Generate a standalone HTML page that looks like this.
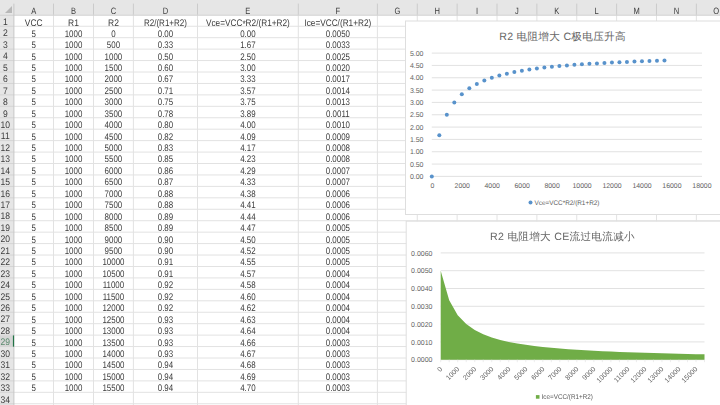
<!DOCTYPE html>
<html><head><meta charset="utf-8"><style>
*{margin:0;padding:0}
html,body{width:720px;height:405px;overflow:hidden;background:#fff}
svg{position:absolute;left:0;top:0;filter:blur(0.3px)}
text{font-family:"Liberation Sans", sans-serif;text-rendering:geometricPrecision;white-space:pre}
</style></head>
<body>
<svg width="720" height="405" viewBox="0 0 720 405">
<rect x="0" y="0" width="720" height="15.200000000000001" fill="#e6e6e6"/>
<rect x="0" y="0" width="13.9" height="405" fill="#e6e6e6"/>
<line x1="13.9" y1="26.24" x2="720" y2="26.24" stroke="#e2e2e2" stroke-width="1"/>
<line x1="0" y1="26.24" x2="13.9" y2="26.24" stroke="#d4d4d4" stroke-width="1"/>
<line x1="13.9" y1="37.68" x2="720" y2="37.68" stroke="#e2e2e2" stroke-width="1"/>
<line x1="0" y1="37.68" x2="13.9" y2="37.68" stroke="#d4d4d4" stroke-width="1"/>
<line x1="13.9" y1="49.12" x2="720" y2="49.12" stroke="#e2e2e2" stroke-width="1"/>
<line x1="0" y1="49.12" x2="13.9" y2="49.12" stroke="#d4d4d4" stroke-width="1"/>
<line x1="13.9" y1="60.56" x2="720" y2="60.56" stroke="#e2e2e2" stroke-width="1"/>
<line x1="0" y1="60.56" x2="13.9" y2="60.56" stroke="#d4d4d4" stroke-width="1"/>
<line x1="13.9" y1="72.00" x2="720" y2="72.00" stroke="#e2e2e2" stroke-width="1"/>
<line x1="0" y1="72.00" x2="13.9" y2="72.00" stroke="#d4d4d4" stroke-width="1"/>
<line x1="13.9" y1="83.44" x2="720" y2="83.44" stroke="#e2e2e2" stroke-width="1"/>
<line x1="0" y1="83.44" x2="13.9" y2="83.44" stroke="#d4d4d4" stroke-width="1"/>
<line x1="13.9" y1="94.88" x2="720" y2="94.88" stroke="#e2e2e2" stroke-width="1"/>
<line x1="0" y1="94.88" x2="13.9" y2="94.88" stroke="#d4d4d4" stroke-width="1"/>
<line x1="13.9" y1="106.32" x2="720" y2="106.32" stroke="#e2e2e2" stroke-width="1"/>
<line x1="0" y1="106.32" x2="13.9" y2="106.32" stroke="#d4d4d4" stroke-width="1"/>
<line x1="13.9" y1="117.76" x2="720" y2="117.76" stroke="#e2e2e2" stroke-width="1"/>
<line x1="0" y1="117.76" x2="13.9" y2="117.76" stroke="#d4d4d4" stroke-width="1"/>
<line x1="13.9" y1="129.20" x2="720" y2="129.20" stroke="#e2e2e2" stroke-width="1"/>
<line x1="0" y1="129.20" x2="13.9" y2="129.20" stroke="#d4d4d4" stroke-width="1"/>
<line x1="13.9" y1="140.64" x2="720" y2="140.64" stroke="#e2e2e2" stroke-width="1"/>
<line x1="0" y1="140.64" x2="13.9" y2="140.64" stroke="#d4d4d4" stroke-width="1"/>
<line x1="13.9" y1="152.08" x2="720" y2="152.08" stroke="#e2e2e2" stroke-width="1"/>
<line x1="0" y1="152.08" x2="13.9" y2="152.08" stroke="#d4d4d4" stroke-width="1"/>
<line x1="13.9" y1="163.52" x2="720" y2="163.52" stroke="#e2e2e2" stroke-width="1"/>
<line x1="0" y1="163.52" x2="13.9" y2="163.52" stroke="#d4d4d4" stroke-width="1"/>
<line x1="13.9" y1="174.96" x2="720" y2="174.96" stroke="#e2e2e2" stroke-width="1"/>
<line x1="0" y1="174.96" x2="13.9" y2="174.96" stroke="#d4d4d4" stroke-width="1"/>
<line x1="13.9" y1="186.40" x2="720" y2="186.40" stroke="#e2e2e2" stroke-width="1"/>
<line x1="0" y1="186.40" x2="13.9" y2="186.40" stroke="#d4d4d4" stroke-width="1"/>
<line x1="13.9" y1="197.84" x2="720" y2="197.84" stroke="#e2e2e2" stroke-width="1"/>
<line x1="0" y1="197.84" x2="13.9" y2="197.84" stroke="#d4d4d4" stroke-width="1"/>
<line x1="13.9" y1="209.28" x2="720" y2="209.28" stroke="#e2e2e2" stroke-width="1"/>
<line x1="0" y1="209.28" x2="13.9" y2="209.28" stroke="#d4d4d4" stroke-width="1"/>
<line x1="13.9" y1="220.72" x2="720" y2="220.72" stroke="#e2e2e2" stroke-width="1"/>
<line x1="0" y1="220.72" x2="13.9" y2="220.72" stroke="#d4d4d4" stroke-width="1"/>
<line x1="13.9" y1="232.16" x2="720" y2="232.16" stroke="#e2e2e2" stroke-width="1"/>
<line x1="0" y1="232.16" x2="13.9" y2="232.16" stroke="#d4d4d4" stroke-width="1"/>
<line x1="13.9" y1="243.60" x2="720" y2="243.60" stroke="#e2e2e2" stroke-width="1"/>
<line x1="0" y1="243.60" x2="13.9" y2="243.60" stroke="#d4d4d4" stroke-width="1"/>
<line x1="13.9" y1="255.04" x2="720" y2="255.04" stroke="#e2e2e2" stroke-width="1"/>
<line x1="0" y1="255.04" x2="13.9" y2="255.04" stroke="#d4d4d4" stroke-width="1"/>
<line x1="13.9" y1="266.48" x2="720" y2="266.48" stroke="#e2e2e2" stroke-width="1"/>
<line x1="0" y1="266.48" x2="13.9" y2="266.48" stroke="#d4d4d4" stroke-width="1"/>
<line x1="13.9" y1="277.92" x2="720" y2="277.92" stroke="#e2e2e2" stroke-width="1"/>
<line x1="0" y1="277.92" x2="13.9" y2="277.92" stroke="#d4d4d4" stroke-width="1"/>
<line x1="13.9" y1="289.36" x2="720" y2="289.36" stroke="#e2e2e2" stroke-width="1"/>
<line x1="0" y1="289.36" x2="13.9" y2="289.36" stroke="#d4d4d4" stroke-width="1"/>
<line x1="13.9" y1="300.80" x2="720" y2="300.80" stroke="#e2e2e2" stroke-width="1"/>
<line x1="0" y1="300.80" x2="13.9" y2="300.80" stroke="#d4d4d4" stroke-width="1"/>
<line x1="13.9" y1="312.24" x2="720" y2="312.24" stroke="#e2e2e2" stroke-width="1"/>
<line x1="0" y1="312.24" x2="13.9" y2="312.24" stroke="#d4d4d4" stroke-width="1"/>
<line x1="13.9" y1="323.68" x2="720" y2="323.68" stroke="#e2e2e2" stroke-width="1"/>
<line x1="0" y1="323.68" x2="13.9" y2="323.68" stroke="#d4d4d4" stroke-width="1"/>
<line x1="13.9" y1="335.12" x2="720" y2="335.12" stroke="#e2e2e2" stroke-width="1"/>
<line x1="0" y1="335.12" x2="13.9" y2="335.12" stroke="#d4d4d4" stroke-width="1"/>
<line x1="13.9" y1="346.56" x2="720" y2="346.56" stroke="#e2e2e2" stroke-width="1"/>
<line x1="0" y1="346.56" x2="13.9" y2="346.56" stroke="#d4d4d4" stroke-width="1"/>
<line x1="13.9" y1="358.00" x2="720" y2="358.00" stroke="#e2e2e2" stroke-width="1"/>
<line x1="0" y1="358.00" x2="13.9" y2="358.00" stroke="#d4d4d4" stroke-width="1"/>
<line x1="13.9" y1="369.44" x2="720" y2="369.44" stroke="#e2e2e2" stroke-width="1"/>
<line x1="0" y1="369.44" x2="13.9" y2="369.44" stroke="#d4d4d4" stroke-width="1"/>
<line x1="13.9" y1="380.88" x2="720" y2="380.88" stroke="#e2e2e2" stroke-width="1"/>
<line x1="0" y1="380.88" x2="13.9" y2="380.88" stroke="#d4d4d4" stroke-width="1"/>
<line x1="13.9" y1="392.32" x2="720" y2="392.32" stroke="#e2e2e2" stroke-width="1"/>
<line x1="0" y1="392.32" x2="13.9" y2="392.32" stroke="#d4d4d4" stroke-width="1"/>
<line x1="13.9" y1="403.76" x2="720" y2="403.76" stroke="#e2e2e2" stroke-width="1"/>
<line x1="0" y1="403.76" x2="13.9" y2="403.76" stroke="#d4d4d4" stroke-width="1"/>
<line x1="13.9" y1="415.20" x2="720" y2="415.20" stroke="#e2e2e2" stroke-width="1"/>
<line x1="0" y1="415.20" x2="13.9" y2="415.20" stroke="#d4d4d4" stroke-width="1"/>
<line x1="53.5" y1="14.8" x2="53.5" y2="405" stroke="#e2e2e2" stroke-width="1"/>
<line x1="53.50" y1="3.6" x2="53.50" y2="14.8" stroke="#c6c6c6" stroke-width="0.85"/>
<line x1="93.5" y1="14.8" x2="93.5" y2="405" stroke="#e2e2e2" stroke-width="1"/>
<line x1="93.50" y1="3.6" x2="93.50" y2="14.8" stroke="#c6c6c6" stroke-width="0.85"/>
<line x1="133.4" y1="14.8" x2="133.4" y2="405" stroke="#e2e2e2" stroke-width="1"/>
<line x1="133.40" y1="3.6" x2="133.40" y2="14.8" stroke="#c6c6c6" stroke-width="0.85"/>
<line x1="197.5" y1="14.8" x2="197.5" y2="405" stroke="#e2e2e2" stroke-width="1"/>
<line x1="197.50" y1="3.6" x2="197.50" y2="14.8" stroke="#c6c6c6" stroke-width="0.85"/>
<line x1="298.3" y1="14.8" x2="298.3" y2="405" stroke="#e2e2e2" stroke-width="1"/>
<line x1="298.30" y1="3.6" x2="298.30" y2="14.8" stroke="#c6c6c6" stroke-width="0.85"/>
<line x1="377.4" y1="14.8" x2="377.4" y2="405" stroke="#e2e2e2" stroke-width="1"/>
<line x1="377.40" y1="3.6" x2="377.40" y2="14.8" stroke="#c6c6c6" stroke-width="0.85"/>
<line x1="417.27" y1="14.8" x2="417.27" y2="405" stroke="#e2e2e2" stroke-width="1"/>
<line x1="417.27" y1="3.6" x2="417.27" y2="14.8" stroke="#c6c6c6" stroke-width="0.85"/>
<line x1="457.14" y1="14.8" x2="457.14" y2="405" stroke="#e2e2e2" stroke-width="1"/>
<line x1="457.14" y1="3.6" x2="457.14" y2="14.8" stroke="#c6c6c6" stroke-width="0.85"/>
<line x1="497.01" y1="14.8" x2="497.01" y2="405" stroke="#e2e2e2" stroke-width="1"/>
<line x1="497.01" y1="3.6" x2="497.01" y2="14.8" stroke="#c6c6c6" stroke-width="0.85"/>
<line x1="536.88" y1="14.8" x2="536.88" y2="405" stroke="#e2e2e2" stroke-width="1"/>
<line x1="536.88" y1="3.6" x2="536.88" y2="14.8" stroke="#c6c6c6" stroke-width="0.85"/>
<line x1="576.75" y1="14.8" x2="576.75" y2="405" stroke="#e2e2e2" stroke-width="1"/>
<line x1="576.75" y1="3.6" x2="576.75" y2="14.8" stroke="#c6c6c6" stroke-width="0.85"/>
<line x1="616.6199999999999" y1="14.8" x2="616.6199999999999" y2="405" stroke="#e2e2e2" stroke-width="1"/>
<line x1="616.62" y1="3.6" x2="616.62" y2="14.8" stroke="#c6c6c6" stroke-width="0.85"/>
<line x1="656.49" y1="14.8" x2="656.49" y2="405" stroke="#e2e2e2" stroke-width="1"/>
<line x1="656.49" y1="3.6" x2="656.49" y2="14.8" stroke="#c6c6c6" stroke-width="0.85"/>
<line x1="696.3599999999999" y1="14.8" x2="696.3599999999999" y2="405" stroke="#e2e2e2" stroke-width="1"/>
<line x1="696.36" y1="3.6" x2="696.36" y2="14.8" stroke="#c6c6c6" stroke-width="0.85"/>
<line x1="736.23" y1="14.8" x2="736.23" y2="405" stroke="#e2e2e2" stroke-width="1"/>
<line x1="736.23" y1="3.6" x2="736.23" y2="14.8" stroke="#c6c6c6" stroke-width="0.85"/>
<line x1="0" y1="15.200000000000001" x2="720" y2="15.200000000000001" stroke="#d0d0d0" stroke-width="1"/>
<line x1="13.9" y1="3.6" x2="13.9" y2="405" stroke="#c8c8c8" stroke-width="1"/>
<rect x="0" y="335.62" width="13.4" height="10.44" fill="#d6d6d6"/>
<rect x="12.9" y="335.42" width="1.2" height="11.24" fill="#217346"/>
<polygon points="12,6 12,13 5,13" fill="#b8b8b8"/>
<text x="41.098" y="13.500" transform="scale(0.82,1)" font-size="9.2" fill="#3c3c3c" text-anchor="middle">A</text>
<text x="89.634" y="13.500" transform="scale(0.82,1)" font-size="9.2" fill="#3c3c3c" text-anchor="middle">B</text>
<text x="138.354" y="13.500" transform="scale(0.82,1)" font-size="9.2" fill="#3c3c3c" text-anchor="middle">C</text>
<text x="201.768" y="13.500" transform="scale(0.82,1)" font-size="9.2" fill="#3c3c3c" text-anchor="middle">D</text>
<text x="302.317" y="13.500" transform="scale(0.82,1)" font-size="9.2" fill="#3c3c3c" text-anchor="middle">E</text>
<text x="412.012" y="13.500" transform="scale(0.82,1)" font-size="9.2" fill="#3c3c3c" text-anchor="middle">F</text>
<text x="484.555" y="13.500" transform="scale(0.82,1)" font-size="9.2" fill="#3c3c3c" text-anchor="middle">G</text>
<text x="533.177" y="13.500" transform="scale(0.82,1)" font-size="9.2" fill="#3c3c3c" text-anchor="middle">H</text>
<text x="581.799" y="13.500" transform="scale(0.82,1)" font-size="9.2" fill="#3c3c3c" text-anchor="middle">I</text>
<text x="630.421" y="13.500" transform="scale(0.82,1)" font-size="9.2" fill="#3c3c3c" text-anchor="middle">J</text>
<text x="679.043" y="13.500" transform="scale(0.82,1)" font-size="9.2" fill="#3c3c3c" text-anchor="middle">K</text>
<text x="727.665" y="13.500" transform="scale(0.82,1)" font-size="9.2" fill="#3c3c3c" text-anchor="middle">L</text>
<text x="776.287" y="13.500" transform="scale(0.82,1)" font-size="9.2" fill="#3c3c3c" text-anchor="middle">M</text>
<text x="824.909" y="13.500" transform="scale(0.82,1)" font-size="9.2" fill="#3c3c3c" text-anchor="middle">N</text>
<text x="873.530" y="13.500" transform="scale(0.82,1)" font-size="9.2" fill="#3c3c3c" text-anchor="middle">O</text>
<text x="5.889" y="25.000" transform="scale(0.9,1)" font-size="9.5" fill="#3c3c3c" text-anchor="middle">1</text>
<text x="5.889" y="36.440" transform="scale(0.9,1)" font-size="9.5" fill="#3c3c3c" text-anchor="middle">2</text>
<text x="5.889" y="47.880" transform="scale(0.9,1)" font-size="9.5" fill="#3c3c3c" text-anchor="middle">3</text>
<text x="5.889" y="59.320" transform="scale(0.9,1)" font-size="9.5" fill="#3c3c3c" text-anchor="middle">4</text>
<text x="5.889" y="70.760" transform="scale(0.9,1)" font-size="9.5" fill="#3c3c3c" text-anchor="middle">5</text>
<text x="5.889" y="82.200" transform="scale(0.9,1)" font-size="9.5" fill="#3c3c3c" text-anchor="middle">6</text>
<text x="5.889" y="93.640" transform="scale(0.9,1)" font-size="9.5" fill="#3c3c3c" text-anchor="middle">7</text>
<text x="5.889" y="105.080" transform="scale(0.9,1)" font-size="9.5" fill="#3c3c3c" text-anchor="middle">8</text>
<text x="5.889" y="116.520" transform="scale(0.9,1)" font-size="9.5" fill="#3c3c3c" text-anchor="middle">9</text>
<text x="5.889" y="127.960" transform="scale(0.9,1)" font-size="9.5" fill="#3c3c3c" text-anchor="middle">10</text>
<text x="5.889" y="139.400" transform="scale(0.9,1)" font-size="9.5" fill="#3c3c3c" text-anchor="middle">11</text>
<text x="5.889" y="150.840" transform="scale(0.9,1)" font-size="9.5" fill="#3c3c3c" text-anchor="middle">12</text>
<text x="5.889" y="162.280" transform="scale(0.9,1)" font-size="9.5" fill="#3c3c3c" text-anchor="middle">13</text>
<text x="5.889" y="173.720" transform="scale(0.9,1)" font-size="9.5" fill="#3c3c3c" text-anchor="middle">14</text>
<text x="5.889" y="185.160" transform="scale(0.9,1)" font-size="9.5" fill="#3c3c3c" text-anchor="middle">15</text>
<text x="5.889" y="196.600" transform="scale(0.9,1)" font-size="9.5" fill="#3c3c3c" text-anchor="middle">16</text>
<text x="5.889" y="208.040" transform="scale(0.9,1)" font-size="9.5" fill="#3c3c3c" text-anchor="middle">17</text>
<text x="5.889" y="219.480" transform="scale(0.9,1)" font-size="9.5" fill="#3c3c3c" text-anchor="middle">18</text>
<text x="5.889" y="230.920" transform="scale(0.9,1)" font-size="9.5" fill="#3c3c3c" text-anchor="middle">19</text>
<text x="5.889" y="242.360" transform="scale(0.9,1)" font-size="9.5" fill="#3c3c3c" text-anchor="middle">20</text>
<text x="5.889" y="253.800" transform="scale(0.9,1)" font-size="9.5" fill="#3c3c3c" text-anchor="middle">21</text>
<text x="5.889" y="265.240" transform="scale(0.9,1)" font-size="9.5" fill="#3c3c3c" text-anchor="middle">22</text>
<text x="5.889" y="276.680" transform="scale(0.9,1)" font-size="9.5" fill="#3c3c3c" text-anchor="middle">23</text>
<text x="5.889" y="288.120" transform="scale(0.9,1)" font-size="9.5" fill="#3c3c3c" text-anchor="middle">24</text>
<text x="5.889" y="299.560" transform="scale(0.9,1)" font-size="9.5" fill="#3c3c3c" text-anchor="middle">25</text>
<text x="5.889" y="311.000" transform="scale(0.9,1)" font-size="9.5" fill="#3c3c3c" text-anchor="middle">26</text>
<text x="5.889" y="322.440" transform="scale(0.9,1)" font-size="9.5" fill="#3c3c3c" text-anchor="middle">27</text>
<text x="5.889" y="333.880" transform="scale(0.9,1)" font-size="9.5" fill="#3c3c3c" text-anchor="middle">28</text>
<text x="5.889" y="345.320" transform="scale(0.9,1)" font-size="9.5" fill="#5a8a6e" text-anchor="middle">29</text>
<text x="5.889" y="356.760" transform="scale(0.9,1)" font-size="9.5" fill="#3c3c3c" text-anchor="middle">30</text>
<text x="5.889" y="368.200" transform="scale(0.9,1)" font-size="9.5" fill="#3c3c3c" text-anchor="middle">31</text>
<text x="5.889" y="379.640" transform="scale(0.9,1)" font-size="9.5" fill="#3c3c3c" text-anchor="middle">32</text>
<text x="5.889" y="391.080" transform="scale(0.9,1)" font-size="9.5" fill="#3c3c3c" text-anchor="middle">33</text>
<text x="5.889" y="402.520" transform="scale(0.9,1)" font-size="9.5" fill="#3c3c3c" text-anchor="middle">34</text>
<text x="5.889" y="413.960" transform="scale(0.9,1)" font-size="9.5" fill="#3c3c3c" text-anchor="middle">35</text>
<text x="37.865" y="25.600" transform="scale(0.89,1)" font-size="9.5" fill="#3c3c3c" text-anchor="middle">VCC</text>
<text x="82.584" y="25.600" transform="scale(0.89,1)" font-size="9.5" fill="#3c3c3c" text-anchor="middle">R1</text>
<text x="127.472" y="25.600" transform="scale(0.89,1)" font-size="9.5" fill="#3c3c3c" text-anchor="middle">R2</text>
<text x="195.799" y="25.600" transform="scale(0.845,1)" font-size="9.5" fill="#3c3c3c" text-anchor="middle">R2/(R1+R2)</text>
<text x="285.599" y="25.600" transform="scale(0.868,1)" font-size="9.5" fill="#3c3c3c" text-anchor="middle">Vce=VCC<tspan dy="1.6">*</tspan><tspan dy="-1.6">R2/(R1+R2)</tspan></text>
<text x="389.228" y="25.600" transform="scale(0.868,1)" font-size="9.5" fill="#3c3c3c" text-anchor="middle">Ice=VCC/(R1+R2)</text>
<text x="40.359" y="36.640" transform="scale(0.835,1)" font-size="9.5" fill="#3c3c3c" text-anchor="middle">5</text>
<text x="88.024" y="36.640" transform="scale(0.835,1)" font-size="9.5" fill="#3c3c3c" text-anchor="middle">1000</text>
<text x="135.868" y="36.640" transform="scale(0.835,1)" font-size="9.5" fill="#3c3c3c" text-anchor="middle">0</text>
<text x="198.144" y="36.640" transform="scale(0.835,1)" font-size="9.5" fill="#3c3c3c" text-anchor="middle">0.00</text>
<text x="296.886" y="36.640" transform="scale(0.835,1)" font-size="9.5" fill="#3c3c3c" text-anchor="middle">0.00</text>
<text x="404.611" y="36.640" transform="scale(0.835,1)" font-size="9.5" fill="#3c3c3c" text-anchor="middle">0.0050</text>
<text x="40.359" y="48.080" transform="scale(0.835,1)" font-size="9.5" fill="#3c3c3c" text-anchor="middle">5</text>
<text x="88.024" y="48.080" transform="scale(0.835,1)" font-size="9.5" fill="#3c3c3c" text-anchor="middle">1000</text>
<text x="135.868" y="48.080" transform="scale(0.835,1)" font-size="9.5" fill="#3c3c3c" text-anchor="middle">500</text>
<text x="198.144" y="48.080" transform="scale(0.835,1)" font-size="9.5" fill="#3c3c3c" text-anchor="middle">0.33</text>
<text x="296.886" y="48.080" transform="scale(0.835,1)" font-size="9.5" fill="#3c3c3c" text-anchor="middle">1.67</text>
<text x="404.611" y="48.080" transform="scale(0.835,1)" font-size="9.5" fill="#3c3c3c" text-anchor="middle">0.0033</text>
<text x="40.359" y="59.520" transform="scale(0.835,1)" font-size="9.5" fill="#3c3c3c" text-anchor="middle">5</text>
<text x="88.024" y="59.520" transform="scale(0.835,1)" font-size="9.5" fill="#3c3c3c" text-anchor="middle">1000</text>
<text x="135.868" y="59.520" transform="scale(0.835,1)" font-size="9.5" fill="#3c3c3c" text-anchor="middle">1000</text>
<text x="198.144" y="59.520" transform="scale(0.835,1)" font-size="9.5" fill="#3c3c3c" text-anchor="middle">0.50</text>
<text x="296.886" y="59.520" transform="scale(0.835,1)" font-size="9.5" fill="#3c3c3c" text-anchor="middle">2.50</text>
<text x="404.611" y="59.520" transform="scale(0.835,1)" font-size="9.5" fill="#3c3c3c" text-anchor="middle">0.0025</text>
<text x="40.359" y="70.960" transform="scale(0.835,1)" font-size="9.5" fill="#3c3c3c" text-anchor="middle">5</text>
<text x="88.024" y="70.960" transform="scale(0.835,1)" font-size="9.5" fill="#3c3c3c" text-anchor="middle">1000</text>
<text x="135.868" y="70.960" transform="scale(0.835,1)" font-size="9.5" fill="#3c3c3c" text-anchor="middle">1500</text>
<text x="198.144" y="70.960" transform="scale(0.835,1)" font-size="9.5" fill="#3c3c3c" text-anchor="middle">0.60</text>
<text x="296.886" y="70.960" transform="scale(0.835,1)" font-size="9.5" fill="#3c3c3c" text-anchor="middle">3.00</text>
<text x="404.611" y="70.960" transform="scale(0.835,1)" font-size="9.5" fill="#3c3c3c" text-anchor="middle">0.0020</text>
<text x="40.359" y="82.400" transform="scale(0.835,1)" font-size="9.5" fill="#3c3c3c" text-anchor="middle">5</text>
<text x="88.024" y="82.400" transform="scale(0.835,1)" font-size="9.5" fill="#3c3c3c" text-anchor="middle">1000</text>
<text x="135.868" y="82.400" transform="scale(0.835,1)" font-size="9.5" fill="#3c3c3c" text-anchor="middle">2000</text>
<text x="198.144" y="82.400" transform="scale(0.835,1)" font-size="9.5" fill="#3c3c3c" text-anchor="middle">0.67</text>
<text x="296.886" y="82.400" transform="scale(0.835,1)" font-size="9.5" fill="#3c3c3c" text-anchor="middle">3.33</text>
<text x="404.611" y="82.400" transform="scale(0.835,1)" font-size="9.5" fill="#3c3c3c" text-anchor="middle">0.0017</text>
<text x="40.359" y="93.840" transform="scale(0.835,1)" font-size="9.5" fill="#3c3c3c" text-anchor="middle">5</text>
<text x="88.024" y="93.840" transform="scale(0.835,1)" font-size="9.5" fill="#3c3c3c" text-anchor="middle">1000</text>
<text x="135.868" y="93.840" transform="scale(0.835,1)" font-size="9.5" fill="#3c3c3c" text-anchor="middle">2500</text>
<text x="198.144" y="93.840" transform="scale(0.835,1)" font-size="9.5" fill="#3c3c3c" text-anchor="middle">0.71</text>
<text x="296.886" y="93.840" transform="scale(0.835,1)" font-size="9.5" fill="#3c3c3c" text-anchor="middle">3.57</text>
<text x="404.611" y="93.840" transform="scale(0.835,1)" font-size="9.5" fill="#3c3c3c" text-anchor="middle">0.0014</text>
<text x="40.359" y="105.280" transform="scale(0.835,1)" font-size="9.5" fill="#3c3c3c" text-anchor="middle">5</text>
<text x="88.024" y="105.280" transform="scale(0.835,1)" font-size="9.5" fill="#3c3c3c" text-anchor="middle">1000</text>
<text x="135.868" y="105.280" transform="scale(0.835,1)" font-size="9.5" fill="#3c3c3c" text-anchor="middle">3000</text>
<text x="198.144" y="105.280" transform="scale(0.835,1)" font-size="9.5" fill="#3c3c3c" text-anchor="middle">0.75</text>
<text x="296.886" y="105.280" transform="scale(0.835,1)" font-size="9.5" fill="#3c3c3c" text-anchor="middle">3.75</text>
<text x="404.611" y="105.280" transform="scale(0.835,1)" font-size="9.5" fill="#3c3c3c" text-anchor="middle">0.0013</text>
<text x="40.359" y="116.720" transform="scale(0.835,1)" font-size="9.5" fill="#3c3c3c" text-anchor="middle">5</text>
<text x="88.024" y="116.720" transform="scale(0.835,1)" font-size="9.5" fill="#3c3c3c" text-anchor="middle">1000</text>
<text x="135.868" y="116.720" transform="scale(0.835,1)" font-size="9.5" fill="#3c3c3c" text-anchor="middle">3500</text>
<text x="198.144" y="116.720" transform="scale(0.835,1)" font-size="9.5" fill="#3c3c3c" text-anchor="middle">0.78</text>
<text x="296.886" y="116.720" transform="scale(0.835,1)" font-size="9.5" fill="#3c3c3c" text-anchor="middle">3.89</text>
<text x="404.611" y="116.720" transform="scale(0.835,1)" font-size="9.5" fill="#3c3c3c" text-anchor="middle">0.0011</text>
<text x="40.359" y="128.160" transform="scale(0.835,1)" font-size="9.5" fill="#3c3c3c" text-anchor="middle">5</text>
<text x="88.024" y="128.160" transform="scale(0.835,1)" font-size="9.5" fill="#3c3c3c" text-anchor="middle">1000</text>
<text x="135.868" y="128.160" transform="scale(0.835,1)" font-size="9.5" fill="#3c3c3c" text-anchor="middle">4000</text>
<text x="198.144" y="128.160" transform="scale(0.835,1)" font-size="9.5" fill="#3c3c3c" text-anchor="middle">0.80</text>
<text x="296.886" y="128.160" transform="scale(0.835,1)" font-size="9.5" fill="#3c3c3c" text-anchor="middle">4.00</text>
<text x="404.611" y="128.160" transform="scale(0.835,1)" font-size="9.5" fill="#3c3c3c" text-anchor="middle">0.0010</text>
<text x="40.359" y="139.600" transform="scale(0.835,1)" font-size="9.5" fill="#3c3c3c" text-anchor="middle">5</text>
<text x="88.024" y="139.600" transform="scale(0.835,1)" font-size="9.5" fill="#3c3c3c" text-anchor="middle">1000</text>
<text x="135.868" y="139.600" transform="scale(0.835,1)" font-size="9.5" fill="#3c3c3c" text-anchor="middle">4500</text>
<text x="198.144" y="139.600" transform="scale(0.835,1)" font-size="9.5" fill="#3c3c3c" text-anchor="middle">0.82</text>
<text x="296.886" y="139.600" transform="scale(0.835,1)" font-size="9.5" fill="#3c3c3c" text-anchor="middle">4.09</text>
<text x="404.611" y="139.600" transform="scale(0.835,1)" font-size="9.5" fill="#3c3c3c" text-anchor="middle">0.0009</text>
<text x="40.359" y="151.040" transform="scale(0.835,1)" font-size="9.5" fill="#3c3c3c" text-anchor="middle">5</text>
<text x="88.024" y="151.040" transform="scale(0.835,1)" font-size="9.5" fill="#3c3c3c" text-anchor="middle">1000</text>
<text x="135.868" y="151.040" transform="scale(0.835,1)" font-size="9.5" fill="#3c3c3c" text-anchor="middle">5000</text>
<text x="198.144" y="151.040" transform="scale(0.835,1)" font-size="9.5" fill="#3c3c3c" text-anchor="middle">0.83</text>
<text x="296.886" y="151.040" transform="scale(0.835,1)" font-size="9.5" fill="#3c3c3c" text-anchor="middle">4.17</text>
<text x="404.611" y="151.040" transform="scale(0.835,1)" font-size="9.5" fill="#3c3c3c" text-anchor="middle">0.0008</text>
<text x="40.359" y="162.480" transform="scale(0.835,1)" font-size="9.5" fill="#3c3c3c" text-anchor="middle">5</text>
<text x="88.024" y="162.480" transform="scale(0.835,1)" font-size="9.5" fill="#3c3c3c" text-anchor="middle">1000</text>
<text x="135.868" y="162.480" transform="scale(0.835,1)" font-size="9.5" fill="#3c3c3c" text-anchor="middle">5500</text>
<text x="198.144" y="162.480" transform="scale(0.835,1)" font-size="9.5" fill="#3c3c3c" text-anchor="middle">0.85</text>
<text x="296.886" y="162.480" transform="scale(0.835,1)" font-size="9.5" fill="#3c3c3c" text-anchor="middle">4.23</text>
<text x="404.611" y="162.480" transform="scale(0.835,1)" font-size="9.5" fill="#3c3c3c" text-anchor="middle">0.0008</text>
<text x="40.359" y="173.920" transform="scale(0.835,1)" font-size="9.5" fill="#3c3c3c" text-anchor="middle">5</text>
<text x="88.024" y="173.920" transform="scale(0.835,1)" font-size="9.5" fill="#3c3c3c" text-anchor="middle">1000</text>
<text x="135.868" y="173.920" transform="scale(0.835,1)" font-size="9.5" fill="#3c3c3c" text-anchor="middle">6000</text>
<text x="198.144" y="173.920" transform="scale(0.835,1)" font-size="9.5" fill="#3c3c3c" text-anchor="middle">0.86</text>
<text x="296.886" y="173.920" transform="scale(0.835,1)" font-size="9.5" fill="#3c3c3c" text-anchor="middle">4.29</text>
<text x="404.611" y="173.920" transform="scale(0.835,1)" font-size="9.5" fill="#3c3c3c" text-anchor="middle">0.0007</text>
<text x="40.359" y="185.360" transform="scale(0.835,1)" font-size="9.5" fill="#3c3c3c" text-anchor="middle">5</text>
<text x="88.024" y="185.360" transform="scale(0.835,1)" font-size="9.5" fill="#3c3c3c" text-anchor="middle">1000</text>
<text x="135.868" y="185.360" transform="scale(0.835,1)" font-size="9.5" fill="#3c3c3c" text-anchor="middle">6500</text>
<text x="198.144" y="185.360" transform="scale(0.835,1)" font-size="9.5" fill="#3c3c3c" text-anchor="middle">0.87</text>
<text x="296.886" y="185.360" transform="scale(0.835,1)" font-size="9.5" fill="#3c3c3c" text-anchor="middle">4.33</text>
<text x="404.611" y="185.360" transform="scale(0.835,1)" font-size="9.5" fill="#3c3c3c" text-anchor="middle">0.0007</text>
<text x="40.359" y="196.800" transform="scale(0.835,1)" font-size="9.5" fill="#3c3c3c" text-anchor="middle">5</text>
<text x="88.024" y="196.800" transform="scale(0.835,1)" font-size="9.5" fill="#3c3c3c" text-anchor="middle">1000</text>
<text x="135.868" y="196.800" transform="scale(0.835,1)" font-size="9.5" fill="#3c3c3c" text-anchor="middle">7000</text>
<text x="198.144" y="196.800" transform="scale(0.835,1)" font-size="9.5" fill="#3c3c3c" text-anchor="middle">0.88</text>
<text x="296.886" y="196.800" transform="scale(0.835,1)" font-size="9.5" fill="#3c3c3c" text-anchor="middle">4.38</text>
<text x="404.611" y="196.800" transform="scale(0.835,1)" font-size="9.5" fill="#3c3c3c" text-anchor="middle">0.0006</text>
<text x="40.359" y="208.240" transform="scale(0.835,1)" font-size="9.5" fill="#3c3c3c" text-anchor="middle">5</text>
<text x="88.024" y="208.240" transform="scale(0.835,1)" font-size="9.5" fill="#3c3c3c" text-anchor="middle">1000</text>
<text x="135.868" y="208.240" transform="scale(0.835,1)" font-size="9.5" fill="#3c3c3c" text-anchor="middle">7500</text>
<text x="198.144" y="208.240" transform="scale(0.835,1)" font-size="9.5" fill="#3c3c3c" text-anchor="middle">0.88</text>
<text x="296.886" y="208.240" transform="scale(0.835,1)" font-size="9.5" fill="#3c3c3c" text-anchor="middle">4.41</text>
<text x="404.611" y="208.240" transform="scale(0.835,1)" font-size="9.5" fill="#3c3c3c" text-anchor="middle">0.0006</text>
<text x="40.359" y="219.680" transform="scale(0.835,1)" font-size="9.5" fill="#3c3c3c" text-anchor="middle">5</text>
<text x="88.024" y="219.680" transform="scale(0.835,1)" font-size="9.5" fill="#3c3c3c" text-anchor="middle">1000</text>
<text x="135.868" y="219.680" transform="scale(0.835,1)" font-size="9.5" fill="#3c3c3c" text-anchor="middle">8000</text>
<text x="198.144" y="219.680" transform="scale(0.835,1)" font-size="9.5" fill="#3c3c3c" text-anchor="middle">0.89</text>
<text x="296.886" y="219.680" transform="scale(0.835,1)" font-size="9.5" fill="#3c3c3c" text-anchor="middle">4.44</text>
<text x="404.611" y="219.680" transform="scale(0.835,1)" font-size="9.5" fill="#3c3c3c" text-anchor="middle">0.0006</text>
<text x="40.359" y="231.120" transform="scale(0.835,1)" font-size="9.5" fill="#3c3c3c" text-anchor="middle">5</text>
<text x="88.024" y="231.120" transform="scale(0.835,1)" font-size="9.5" fill="#3c3c3c" text-anchor="middle">1000</text>
<text x="135.868" y="231.120" transform="scale(0.835,1)" font-size="9.5" fill="#3c3c3c" text-anchor="middle">8500</text>
<text x="198.144" y="231.120" transform="scale(0.835,1)" font-size="9.5" fill="#3c3c3c" text-anchor="middle">0.89</text>
<text x="296.886" y="231.120" transform="scale(0.835,1)" font-size="9.5" fill="#3c3c3c" text-anchor="middle">4.47</text>
<text x="404.611" y="231.120" transform="scale(0.835,1)" font-size="9.5" fill="#3c3c3c" text-anchor="middle">0.0005</text>
<text x="40.359" y="242.560" transform="scale(0.835,1)" font-size="9.5" fill="#3c3c3c" text-anchor="middle">5</text>
<text x="88.024" y="242.560" transform="scale(0.835,1)" font-size="9.5" fill="#3c3c3c" text-anchor="middle">1000</text>
<text x="135.868" y="242.560" transform="scale(0.835,1)" font-size="9.5" fill="#3c3c3c" text-anchor="middle">9000</text>
<text x="198.144" y="242.560" transform="scale(0.835,1)" font-size="9.5" fill="#3c3c3c" text-anchor="middle">0.90</text>
<text x="296.886" y="242.560" transform="scale(0.835,1)" font-size="9.5" fill="#3c3c3c" text-anchor="middle">4.50</text>
<text x="404.611" y="242.560" transform="scale(0.835,1)" font-size="9.5" fill="#3c3c3c" text-anchor="middle">0.0005</text>
<text x="40.359" y="254.000" transform="scale(0.835,1)" font-size="9.5" fill="#3c3c3c" text-anchor="middle">5</text>
<text x="88.024" y="254.000" transform="scale(0.835,1)" font-size="9.5" fill="#3c3c3c" text-anchor="middle">1000</text>
<text x="135.868" y="254.000" transform="scale(0.835,1)" font-size="9.5" fill="#3c3c3c" text-anchor="middle">9500</text>
<text x="198.144" y="254.000" transform="scale(0.835,1)" font-size="9.5" fill="#3c3c3c" text-anchor="middle">0.90</text>
<text x="296.886" y="254.000" transform="scale(0.835,1)" font-size="9.5" fill="#3c3c3c" text-anchor="middle">4.52</text>
<text x="404.611" y="254.000" transform="scale(0.835,1)" font-size="9.5" fill="#3c3c3c" text-anchor="middle">0.0005</text>
<text x="40.359" y="265.440" transform="scale(0.835,1)" font-size="9.5" fill="#3c3c3c" text-anchor="middle">5</text>
<text x="88.024" y="265.440" transform="scale(0.835,1)" font-size="9.5" fill="#3c3c3c" text-anchor="middle">1000</text>
<text x="135.868" y="265.440" transform="scale(0.835,1)" font-size="9.5" fill="#3c3c3c" text-anchor="middle">10000</text>
<text x="198.144" y="265.440" transform="scale(0.835,1)" font-size="9.5" fill="#3c3c3c" text-anchor="middle">0.91</text>
<text x="296.886" y="265.440" transform="scale(0.835,1)" font-size="9.5" fill="#3c3c3c" text-anchor="middle">4.55</text>
<text x="404.611" y="265.440" transform="scale(0.835,1)" font-size="9.5" fill="#3c3c3c" text-anchor="middle">0.0005</text>
<text x="40.359" y="276.880" transform="scale(0.835,1)" font-size="9.5" fill="#3c3c3c" text-anchor="middle">5</text>
<text x="88.024" y="276.880" transform="scale(0.835,1)" font-size="9.5" fill="#3c3c3c" text-anchor="middle">1000</text>
<text x="135.868" y="276.880" transform="scale(0.835,1)" font-size="9.5" fill="#3c3c3c" text-anchor="middle">10500</text>
<text x="198.144" y="276.880" transform="scale(0.835,1)" font-size="9.5" fill="#3c3c3c" text-anchor="middle">0.91</text>
<text x="296.886" y="276.880" transform="scale(0.835,1)" font-size="9.5" fill="#3c3c3c" text-anchor="middle">4.57</text>
<text x="404.611" y="276.880" transform="scale(0.835,1)" font-size="9.5" fill="#3c3c3c" text-anchor="middle">0.0004</text>
<text x="40.359" y="288.320" transform="scale(0.835,1)" font-size="9.5" fill="#3c3c3c" text-anchor="middle">5</text>
<text x="88.024" y="288.320" transform="scale(0.835,1)" font-size="9.5" fill="#3c3c3c" text-anchor="middle">1000</text>
<text x="135.868" y="288.320" transform="scale(0.835,1)" font-size="9.5" fill="#3c3c3c" text-anchor="middle">11000</text>
<text x="198.144" y="288.320" transform="scale(0.835,1)" font-size="9.5" fill="#3c3c3c" text-anchor="middle">0.92</text>
<text x="296.886" y="288.320" transform="scale(0.835,1)" font-size="9.5" fill="#3c3c3c" text-anchor="middle">4.58</text>
<text x="404.611" y="288.320" transform="scale(0.835,1)" font-size="9.5" fill="#3c3c3c" text-anchor="middle">0.0004</text>
<text x="40.359" y="299.760" transform="scale(0.835,1)" font-size="9.5" fill="#3c3c3c" text-anchor="middle">5</text>
<text x="88.024" y="299.760" transform="scale(0.835,1)" font-size="9.5" fill="#3c3c3c" text-anchor="middle">1000</text>
<text x="135.868" y="299.760" transform="scale(0.835,1)" font-size="9.5" fill="#3c3c3c" text-anchor="middle">11500</text>
<text x="198.144" y="299.760" transform="scale(0.835,1)" font-size="9.5" fill="#3c3c3c" text-anchor="middle">0.92</text>
<text x="296.886" y="299.760" transform="scale(0.835,1)" font-size="9.5" fill="#3c3c3c" text-anchor="middle">4.60</text>
<text x="404.611" y="299.760" transform="scale(0.835,1)" font-size="9.5" fill="#3c3c3c" text-anchor="middle">0.0004</text>
<text x="40.359" y="311.200" transform="scale(0.835,1)" font-size="9.5" fill="#3c3c3c" text-anchor="middle">5</text>
<text x="88.024" y="311.200" transform="scale(0.835,1)" font-size="9.5" fill="#3c3c3c" text-anchor="middle">1000</text>
<text x="135.868" y="311.200" transform="scale(0.835,1)" font-size="9.5" fill="#3c3c3c" text-anchor="middle">12000</text>
<text x="198.144" y="311.200" transform="scale(0.835,1)" font-size="9.5" fill="#3c3c3c" text-anchor="middle">0.92</text>
<text x="296.886" y="311.200" transform="scale(0.835,1)" font-size="9.5" fill="#3c3c3c" text-anchor="middle">4.62</text>
<text x="404.611" y="311.200" transform="scale(0.835,1)" font-size="9.5" fill="#3c3c3c" text-anchor="middle">0.0004</text>
<text x="40.359" y="322.640" transform="scale(0.835,1)" font-size="9.5" fill="#3c3c3c" text-anchor="middle">5</text>
<text x="88.024" y="322.640" transform="scale(0.835,1)" font-size="9.5" fill="#3c3c3c" text-anchor="middle">1000</text>
<text x="135.868" y="322.640" transform="scale(0.835,1)" font-size="9.5" fill="#3c3c3c" text-anchor="middle">12500</text>
<text x="198.144" y="322.640" transform="scale(0.835,1)" font-size="9.5" fill="#3c3c3c" text-anchor="middle">0.93</text>
<text x="296.886" y="322.640" transform="scale(0.835,1)" font-size="9.5" fill="#3c3c3c" text-anchor="middle">4.63</text>
<text x="404.611" y="322.640" transform="scale(0.835,1)" font-size="9.5" fill="#3c3c3c" text-anchor="middle">0.0004</text>
<text x="40.359" y="334.080" transform="scale(0.835,1)" font-size="9.5" fill="#3c3c3c" text-anchor="middle">5</text>
<text x="88.024" y="334.080" transform="scale(0.835,1)" font-size="9.5" fill="#3c3c3c" text-anchor="middle">1000</text>
<text x="135.868" y="334.080" transform="scale(0.835,1)" font-size="9.5" fill="#3c3c3c" text-anchor="middle">13000</text>
<text x="198.144" y="334.080" transform="scale(0.835,1)" font-size="9.5" fill="#3c3c3c" text-anchor="middle">0.93</text>
<text x="296.886" y="334.080" transform="scale(0.835,1)" font-size="9.5" fill="#3c3c3c" text-anchor="middle">4.64</text>
<text x="404.611" y="334.080" transform="scale(0.835,1)" font-size="9.5" fill="#3c3c3c" text-anchor="middle">0.0004</text>
<text x="40.359" y="345.520" transform="scale(0.835,1)" font-size="9.5" fill="#3c3c3c" text-anchor="middle">5</text>
<text x="88.024" y="345.520" transform="scale(0.835,1)" font-size="9.5" fill="#3c3c3c" text-anchor="middle">1000</text>
<text x="135.868" y="345.520" transform="scale(0.835,1)" font-size="9.5" fill="#3c3c3c" text-anchor="middle">13500</text>
<text x="198.144" y="345.520" transform="scale(0.835,1)" font-size="9.5" fill="#3c3c3c" text-anchor="middle">0.93</text>
<text x="296.886" y="345.520" transform="scale(0.835,1)" font-size="9.5" fill="#3c3c3c" text-anchor="middle">4.66</text>
<text x="404.611" y="345.520" transform="scale(0.835,1)" font-size="9.5" fill="#3c3c3c" text-anchor="middle">0.0003</text>
<text x="40.359" y="356.960" transform="scale(0.835,1)" font-size="9.5" fill="#3c3c3c" text-anchor="middle">5</text>
<text x="88.024" y="356.960" transform="scale(0.835,1)" font-size="9.5" fill="#3c3c3c" text-anchor="middle">1000</text>
<text x="135.868" y="356.960" transform="scale(0.835,1)" font-size="9.5" fill="#3c3c3c" text-anchor="middle">14000</text>
<text x="198.144" y="356.960" transform="scale(0.835,1)" font-size="9.5" fill="#3c3c3c" text-anchor="middle">0.93</text>
<text x="296.886" y="356.960" transform="scale(0.835,1)" font-size="9.5" fill="#3c3c3c" text-anchor="middle">4.67</text>
<text x="404.611" y="356.960" transform="scale(0.835,1)" font-size="9.5" fill="#3c3c3c" text-anchor="middle">0.0003</text>
<text x="40.359" y="368.400" transform="scale(0.835,1)" font-size="9.5" fill="#3c3c3c" text-anchor="middle">5</text>
<text x="88.024" y="368.400" transform="scale(0.835,1)" font-size="9.5" fill="#3c3c3c" text-anchor="middle">1000</text>
<text x="135.868" y="368.400" transform="scale(0.835,1)" font-size="9.5" fill="#3c3c3c" text-anchor="middle">14500</text>
<text x="198.144" y="368.400" transform="scale(0.835,1)" font-size="9.5" fill="#3c3c3c" text-anchor="middle">0.94</text>
<text x="296.886" y="368.400" transform="scale(0.835,1)" font-size="9.5" fill="#3c3c3c" text-anchor="middle">4.68</text>
<text x="404.611" y="368.400" transform="scale(0.835,1)" font-size="9.5" fill="#3c3c3c" text-anchor="middle">0.0003</text>
<text x="40.359" y="379.840" transform="scale(0.835,1)" font-size="9.5" fill="#3c3c3c" text-anchor="middle">5</text>
<text x="88.024" y="379.840" transform="scale(0.835,1)" font-size="9.5" fill="#3c3c3c" text-anchor="middle">1000</text>
<text x="135.868" y="379.840" transform="scale(0.835,1)" font-size="9.5" fill="#3c3c3c" text-anchor="middle">15000</text>
<text x="198.144" y="379.840" transform="scale(0.835,1)" font-size="9.5" fill="#3c3c3c" text-anchor="middle">0.94</text>
<text x="296.886" y="379.840" transform="scale(0.835,1)" font-size="9.5" fill="#3c3c3c" text-anchor="middle">4.69</text>
<text x="404.611" y="379.840" transform="scale(0.835,1)" font-size="9.5" fill="#3c3c3c" text-anchor="middle">0.0003</text>
<text x="40.359" y="391.280" transform="scale(0.835,1)" font-size="9.5" fill="#3c3c3c" text-anchor="middle">5</text>
<text x="88.024" y="391.280" transform="scale(0.835,1)" font-size="9.5" fill="#3c3c3c" text-anchor="middle">1000</text>
<text x="135.868" y="391.280" transform="scale(0.835,1)" font-size="9.5" fill="#3c3c3c" text-anchor="middle">15500</text>
<text x="198.144" y="391.280" transform="scale(0.835,1)" font-size="9.5" fill="#3c3c3c" text-anchor="middle">0.94</text>
<text x="296.886" y="391.280" transform="scale(0.835,1)" font-size="9.5" fill="#3c3c3c" text-anchor="middle">4.70</text>
<text x="404.611" y="391.280" transform="scale(0.835,1)" font-size="9.5" fill="#3c3c3c" text-anchor="middle">0.0003</text>
<rect x="405.5" y="21.0" width="320" height="193.5" fill="#fff" stroke="#dedede" stroke-width="1"/>
<line x1="431.8" y1="176.40" x2="702.0" y2="176.40" stroke="#d9d9d9" stroke-width="0.8"/>
<line x1="431.8" y1="164.07" x2="702.0" y2="164.07" stroke="#d9d9d9" stroke-width="0.8"/>
<line x1="431.8" y1="151.74" x2="702.0" y2="151.74" stroke="#d9d9d9" stroke-width="0.8"/>
<line x1="431.8" y1="139.41" x2="702.0" y2="139.41" stroke="#d9d9d9" stroke-width="0.8"/>
<line x1="431.8" y1="127.08" x2="702.0" y2="127.08" stroke="#d9d9d9" stroke-width="0.8"/>
<line x1="431.8" y1="114.75" x2="702.0" y2="114.75" stroke="#d9d9d9" stroke-width="0.8"/>
<line x1="431.8" y1="102.42" x2="702.0" y2="102.42" stroke="#d9d9d9" stroke-width="0.8"/>
<line x1="431.8" y1="90.09" x2="702.0" y2="90.09" stroke="#d9d9d9" stroke-width="0.8"/>
<line x1="431.8" y1="77.76" x2="702.0" y2="77.76" stroke="#d9d9d9" stroke-width="0.8"/>
<line x1="431.8" y1="65.43" x2="702.0" y2="65.43" stroke="#d9d9d9" stroke-width="0.8"/>
<line x1="431.8" y1="53.10" x2="702.0" y2="53.10" stroke="#d9d9d9" stroke-width="0.8"/>
<circle cx="431.80" cy="176.40" r="2.0" fill="#5892cb"/>
<circle cx="439.31" cy="135.30" r="2.0" fill="#5892cb"/>
<circle cx="446.81" cy="114.75" r="2.0" fill="#5892cb"/>
<circle cx="454.32" cy="102.42" r="2.0" fill="#5892cb"/>
<circle cx="461.82" cy="94.20" r="2.0" fill="#5892cb"/>
<circle cx="469.33" cy="88.33" r="2.0" fill="#5892cb"/>
<circle cx="476.83" cy="83.93" r="2.0" fill="#5892cb"/>
<circle cx="484.34" cy="80.50" r="2.0" fill="#5892cb"/>
<circle cx="491.84" cy="77.76" r="2.0" fill="#5892cb"/>
<circle cx="499.35" cy="75.52" r="2.0" fill="#5892cb"/>
<circle cx="506.86" cy="73.65" r="2.0" fill="#5892cb"/>
<circle cx="514.36" cy="72.07" r="2.0" fill="#5892cb"/>
<circle cx="521.87" cy="70.71" r="2.0" fill="#5892cb"/>
<circle cx="529.37" cy="69.54" r="2.0" fill="#5892cb"/>
<circle cx="536.88" cy="68.51" r="2.0" fill="#5892cb"/>
<circle cx="544.38" cy="67.61" r="2.0" fill="#5892cb"/>
<circle cx="551.89" cy="66.80" r="2.0" fill="#5892cb"/>
<circle cx="559.39" cy="66.08" r="2.0" fill="#5892cb"/>
<circle cx="566.90" cy="65.43" r="2.0" fill="#5892cb"/>
<circle cx="574.41" cy="64.84" r="2.0" fill="#5892cb"/>
<circle cx="581.91" cy="64.31" r="2.0" fill="#5892cb"/>
<circle cx="589.42" cy="63.82" r="2.0" fill="#5892cb"/>
<circle cx="596.92" cy="63.38" r="2.0" fill="#5892cb"/>
<circle cx="604.43" cy="62.96" r="2.0" fill="#5892cb"/>
<circle cx="611.93" cy="62.58" r="2.0" fill="#5892cb"/>
<circle cx="619.44" cy="62.23" r="2.0" fill="#5892cb"/>
<circle cx="626.94" cy="61.91" r="2.0" fill="#5892cb"/>
<circle cx="634.45" cy="61.60" r="2.0" fill="#5892cb"/>
<circle cx="641.96" cy="61.32" r="2.0" fill="#5892cb"/>
<circle cx="649.46" cy="61.05" r="2.0" fill="#5892cb"/>
<circle cx="656.97" cy="60.81" r="2.0" fill="#5892cb"/>
<circle cx="664.47" cy="60.57" r="2.0" fill="#5892cb"/>
<text x="423.500" y="179.000" font-size="7.0" fill="#636363" text-anchor="end">0.00</text>
<text x="423.500" y="166.670" font-size="7.0" fill="#636363" text-anchor="end">0.50</text>
<text x="423.500" y="154.340" font-size="7.0" fill="#636363" text-anchor="end">1.00</text>
<text x="423.500" y="142.010" font-size="7.0" fill="#636363" text-anchor="end">1.50</text>
<text x="423.500" y="129.680" font-size="7.0" fill="#636363" text-anchor="end">2.00</text>
<text x="423.500" y="117.350" font-size="7.0" fill="#636363" text-anchor="end">2.50</text>
<text x="423.500" y="105.020" font-size="7.0" fill="#636363" text-anchor="end">3.00</text>
<text x="423.500" y="92.690" font-size="7.0" fill="#636363" text-anchor="end">3.50</text>
<text x="423.500" y="80.360" font-size="7.0" fill="#636363" text-anchor="end">4.00</text>
<text x="423.500" y="68.030" font-size="7.0" fill="#636363" text-anchor="end">4.50</text>
<text x="423.500" y="55.700" font-size="7.0" fill="#636363" text-anchor="end">5.00</text>
<text x="432.300" y="188.400" font-size="6.9" fill="#636363" text-anchor="middle">0</text>
<text x="462.256" y="188.400" font-size="6.9" fill="#636363" text-anchor="middle">2000</text>
<text x="492.211" y="188.400" font-size="6.9" fill="#636363" text-anchor="middle">4000</text>
<text x="522.167" y="188.400" font-size="6.9" fill="#636363" text-anchor="middle">6000</text>
<text x="552.122" y="188.400" font-size="6.9" fill="#636363" text-anchor="middle">8000</text>
<text x="582.078" y="188.400" font-size="6.9" fill="#636363" text-anchor="middle">10000</text>
<text x="612.033" y="188.400" font-size="6.9" fill="#636363" text-anchor="middle">12000</text>
<text x="641.989" y="188.400" font-size="6.9" fill="#636363" text-anchor="middle">14000</text>
<text x="671.944" y="188.400" font-size="6.9" fill="#636363" text-anchor="middle">16000</text>
<text x="701.900" y="188.400" font-size="6.9" fill="#636363" text-anchor="middle">18000</text>
<text x="562.500" y="39.500" font-size="10.6" fill="#666666" text-anchor="middle" letter-spacing="0.3">R2 电阻增大 C极电压升高</text>
<circle cx="530.5" cy="202.5" r="2" fill="#5892cb"/>
<text x="559.686" y="205.000" transform="scale(0.955,1)" font-size="6.7" fill="#595959" text-anchor="start">Vce=VCC*R2/(R1+R2)</text>
<rect x="406.2" y="221.2" width="320" height="200" fill="#fff" stroke="#dedede" stroke-width="1"/>
<line x1="440.7" y1="359.70" x2="704.5" y2="359.70" stroke="#d9d9d9" stroke-width="0.8"/>
<line x1="440.7" y1="341.90" x2="704.5" y2="341.90" stroke="#d9d9d9" stroke-width="0.8"/>
<line x1="440.7" y1="324.10" x2="704.5" y2="324.10" stroke="#d9d9d9" stroke-width="0.8"/>
<line x1="440.7" y1="306.30" x2="704.5" y2="306.30" stroke="#d9d9d9" stroke-width="0.8"/>
<line x1="440.7" y1="288.50" x2="704.5" y2="288.50" stroke="#d9d9d9" stroke-width="0.8"/>
<line x1="440.7" y1="270.70" x2="704.5" y2="270.70" stroke="#d9d9d9" stroke-width="0.8"/>
<line x1="440.7" y1="252.90" x2="704.5" y2="252.90" stroke="#d9d9d9" stroke-width="0.8"/>
<polygon points="440.70,359.70 440.70,270.70 449.21,300.37 457.72,315.20 466.23,324.10 474.74,330.03 483.25,334.27 491.76,337.45 500.27,339.92 508.78,341.90 517.29,343.52 525.80,344.87 534.31,346.01 542.82,346.99 551.33,347.83 559.84,348.57 568.35,349.23 576.85,349.81 585.36,350.33 593.87,350.80 602.38,351.22 610.89,351.61 619.40,351.96 627.91,352.28 636.42,352.58 644.93,352.85 653.44,353.11 661.95,353.34 670.46,353.56 678.97,353.77 687.48,353.96 695.99,354.14 704.50,354.31 704.50,359.70" fill="#70ad47"/>
<line x1="440.70" y1="359.7" x2="440.70" y2="362.2" stroke="#e0e0e0" stroke-width="0.6"/>
<line x1="449.21" y1="359.7" x2="449.21" y2="362.2" stroke="#e0e0e0" stroke-width="0.6"/>
<line x1="457.72" y1="359.7" x2="457.72" y2="362.2" stroke="#e0e0e0" stroke-width="0.6"/>
<line x1="466.23" y1="359.7" x2="466.23" y2="362.2" stroke="#e0e0e0" stroke-width="0.6"/>
<line x1="474.74" y1="359.7" x2="474.74" y2="362.2" stroke="#e0e0e0" stroke-width="0.6"/>
<line x1="483.25" y1="359.7" x2="483.25" y2="362.2" stroke="#e0e0e0" stroke-width="0.6"/>
<line x1="491.76" y1="359.7" x2="491.76" y2="362.2" stroke="#e0e0e0" stroke-width="0.6"/>
<line x1="500.27" y1="359.7" x2="500.27" y2="362.2" stroke="#e0e0e0" stroke-width="0.6"/>
<line x1="508.78" y1="359.7" x2="508.78" y2="362.2" stroke="#e0e0e0" stroke-width="0.6"/>
<line x1="517.29" y1="359.7" x2="517.29" y2="362.2" stroke="#e0e0e0" stroke-width="0.6"/>
<line x1="525.80" y1="359.7" x2="525.80" y2="362.2" stroke="#e0e0e0" stroke-width="0.6"/>
<line x1="534.31" y1="359.7" x2="534.31" y2="362.2" stroke="#e0e0e0" stroke-width="0.6"/>
<line x1="542.82" y1="359.7" x2="542.82" y2="362.2" stroke="#e0e0e0" stroke-width="0.6"/>
<line x1="551.33" y1="359.7" x2="551.33" y2="362.2" stroke="#e0e0e0" stroke-width="0.6"/>
<line x1="559.84" y1="359.7" x2="559.84" y2="362.2" stroke="#e0e0e0" stroke-width="0.6"/>
<line x1="568.35" y1="359.7" x2="568.35" y2="362.2" stroke="#e0e0e0" stroke-width="0.6"/>
<line x1="576.85" y1="359.7" x2="576.85" y2="362.2" stroke="#e0e0e0" stroke-width="0.6"/>
<line x1="585.36" y1="359.7" x2="585.36" y2="362.2" stroke="#e0e0e0" stroke-width="0.6"/>
<line x1="593.87" y1="359.7" x2="593.87" y2="362.2" stroke="#e0e0e0" stroke-width="0.6"/>
<line x1="602.38" y1="359.7" x2="602.38" y2="362.2" stroke="#e0e0e0" stroke-width="0.6"/>
<line x1="610.89" y1="359.7" x2="610.89" y2="362.2" stroke="#e0e0e0" stroke-width="0.6"/>
<line x1="619.40" y1="359.7" x2="619.40" y2="362.2" stroke="#e0e0e0" stroke-width="0.6"/>
<line x1="627.91" y1="359.7" x2="627.91" y2="362.2" stroke="#e0e0e0" stroke-width="0.6"/>
<line x1="636.42" y1="359.7" x2="636.42" y2="362.2" stroke="#e0e0e0" stroke-width="0.6"/>
<line x1="644.93" y1="359.7" x2="644.93" y2="362.2" stroke="#e0e0e0" stroke-width="0.6"/>
<line x1="653.44" y1="359.7" x2="653.44" y2="362.2" stroke="#e0e0e0" stroke-width="0.6"/>
<line x1="661.95" y1="359.7" x2="661.95" y2="362.2" stroke="#e0e0e0" stroke-width="0.6"/>
<line x1="670.46" y1="359.7" x2="670.46" y2="362.2" stroke="#e0e0e0" stroke-width="0.6"/>
<line x1="678.97" y1="359.7" x2="678.97" y2="362.2" stroke="#e0e0e0" stroke-width="0.6"/>
<line x1="687.48" y1="359.7" x2="687.48" y2="362.2" stroke="#e0e0e0" stroke-width="0.6"/>
<line x1="695.99" y1="359.7" x2="695.99" y2="362.2" stroke="#e0e0e0" stroke-width="0.6"/>
<line x1="704.50" y1="359.7" x2="704.50" y2="362.2" stroke="#e0e0e0" stroke-width="0.6"/>
<text x="432.500" y="362.300" font-size="7.0" fill="#636363" text-anchor="end">0.0000</text>
<text x="432.500" y="344.500" font-size="7.0" fill="#636363" text-anchor="end">0.0010</text>
<text x="432.500" y="326.700" font-size="7.0" fill="#636363" text-anchor="end">0.0020</text>
<text x="432.500" y="308.900" font-size="7.0" fill="#636363" text-anchor="end">0.0030</text>
<text x="432.500" y="291.100" font-size="7.0" fill="#636363" text-anchor="end">0.0040</text>
<text x="432.500" y="273.300" font-size="7.0" fill="#636363" text-anchor="end">0.0050</text>
<text x="432.500" y="255.500" font-size="7.0" fill="#636363" text-anchor="end">0.0060</text>
<text transform="translate(441.20,367.90) rotate(-45)" x="0" y="2.3" font-size="7.0" fill="#636363" text-anchor="end">0</text>
<text transform="translate(458.22,367.90) rotate(-45)" x="0" y="2.3" font-size="7.0" fill="#636363" text-anchor="end">1000</text>
<text transform="translate(475.24,367.90) rotate(-45)" x="0" y="2.3" font-size="7.0" fill="#636363" text-anchor="end">2000</text>
<text transform="translate(492.26,367.90) rotate(-45)" x="0" y="2.3" font-size="7.0" fill="#636363" text-anchor="end">3000</text>
<text transform="translate(509.28,367.90) rotate(-45)" x="0" y="2.3" font-size="7.0" fill="#636363" text-anchor="end">4000</text>
<text transform="translate(526.30,367.90) rotate(-45)" x="0" y="2.3" font-size="7.0" fill="#636363" text-anchor="end">5000</text>
<text transform="translate(543.32,367.90) rotate(-45)" x="0" y="2.3" font-size="7.0" fill="#636363" text-anchor="end">6000</text>
<text transform="translate(560.34,367.90) rotate(-45)" x="0" y="2.3" font-size="7.0" fill="#636363" text-anchor="end">7000</text>
<text transform="translate(577.35,367.90) rotate(-45)" x="0" y="2.3" font-size="7.0" fill="#636363" text-anchor="end">8000</text>
<text transform="translate(594.37,367.90) rotate(-45)" x="0" y="2.3" font-size="7.0" fill="#636363" text-anchor="end">9000</text>
<text transform="translate(611.39,367.90) rotate(-45)" x="0" y="2.3" font-size="7.0" fill="#636363" text-anchor="end">10000</text>
<text transform="translate(628.41,367.90) rotate(-45)" x="0" y="2.3" font-size="7.0" fill="#636363" text-anchor="end">11000</text>
<text transform="translate(645.43,367.90) rotate(-45)" x="0" y="2.3" font-size="7.0" fill="#636363" text-anchor="end">12000</text>
<text transform="translate(662.45,367.90) rotate(-45)" x="0" y="2.3" font-size="7.0" fill="#636363" text-anchor="end">13000</text>
<text transform="translate(679.47,367.90) rotate(-45)" x="0" y="2.3" font-size="7.0" fill="#636363" text-anchor="end">14000</text>
<text transform="translate(696.49,367.90) rotate(-45)" x="0" y="2.3" font-size="7.0" fill="#636363" text-anchor="end">15000</text>
<text x="562.500" y="240.000" font-size="10.6" fill="#666666" text-anchor="middle" letter-spacing="0.3">R2 电阻增大 CE流过电流减小</text>
<rect x="535.9" y="395.1" width="3.6" height="3.6" fill="#70ad47"/>
<text x="582.366" y="399.300" transform="scale(0.93,1)" font-size="6.8" fill="#595959" text-anchor="start">Ice=VCC/(R1+R2)</text>
</svg>
</body></html>
